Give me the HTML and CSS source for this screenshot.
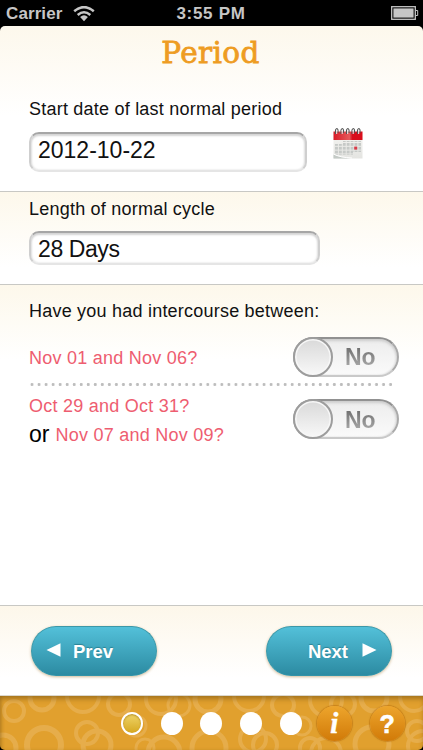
FILE: index.html
```html
<!DOCTYPE html>
<html lang="en">
<head>
<meta charset="utf-8">
<title>Period</title>
<link rel="stylesheet" href="styles.css">
</head>
<body>
<div class="app">
  <header class="status">
    <div class="status-left"><span class="carrier">Carrier</span>
      <svg class="wifi" width="22" height="16" viewBox="0 0 22 16" fill="none" stroke="#c6c6c6" stroke-width="2.5">
        <path d="M1.2 5.2Q11-3 20.8 5.2"/><path d="M4.7 9Q11 3.6 17.3 9"/><path d="M7.1 11.1Q11 7.5 14.9 11.1L11 15.3Z" fill="#c6c6c6" stroke="none"/>
      </svg>
    </div>
    <span class="time">3:55 PM</span>
    <svg class="battery" width="28" height="15" viewBox="0 0 28 15" fill="none" stroke="#c6c6c6">
      <rect x=".7" y=".7" width="23.6" height="12.6" stroke-width="1.3"/><rect x="2.4" y="2.4" width="20.2" height="9.2" fill="#c6c6c6" stroke="none"/><path d="M24.5 4.5h2.2v5h-2.2"/>
    </svg>
  </header>
  <section class="panel start">
    <h1>Period</h1>
    <label class="label start-label">Start date of last normal period</label>
    <div class="row">
      <div class="field date">2012-10-22</div>
      <svg class="calendar" width="30" height="33" viewBox="0 0 30 33">
        <defs>
          <linearGradient id="paper" x1="0" y1="0" x2="0" y2="1"><stop offset="0" stop-color="#f5f5f2"/><stop offset="1" stop-color="#e4e4e1"/></linearGradient>
          <linearGradient id="red" x1="0" y1="0" x2="1" y2="0"><stop offset="0" stop-color="#d81c28"/><stop offset=".55" stop-color="#e65a5c"/><stop offset=".65" stop-color="#d90e1c"/><stop offset="1" stop-color="#d90e1c"/></linearGradient>
          <pattern id="days" x="2" y="16" width="3.9" height="3.8" patternUnits="userSpaceOnUse"><rect width="2.9" height="2.8" fill="#c6c9c7"/></pattern>
        </defs>
        <path d="M.5 5h29v26.500H.5z" fill="url(#paper)"/>
        <path d="M.5 4.500h29V13H.5z" fill="url(#red)"/>
        <path d="M10 14h18v11h-8v3H2V17h8z" fill="url(#days)"/>
        <path d="M.5 27.500Q8 31 18 31.500H.5z" fill="#c4cac6"/><path d="M.5 27Q7 30.500 19 31" fill="none" stroke="#fff"/>
        <rect x="21.200" y="19.600" width="3" height="3" fill="#d83a48"/>
        <g fill="none" stroke="#555" stroke-width="1.100"><path d="M2.500 7V3q1.500-3 2.500 0v3"/><path d="M8 7V3q1.500-3 2.500 0v3"/><path d="M13.500 7V3q1.500-3 2.500 0v3"/><path d="M19 7V3q1.500-3 2.500 0v3"/><path d="M24.500 7V3q1.500-3 2.500 0v3"/></g>
        <g stroke="#eee" stroke-width="1"><path d="M3.700 3v4M9.200 3v4M14.700 3v4M20.200 3v4M25.700 3v4"/></g>
      </svg>
    </div>
  </section>
  <section class="panel cycle">
    <label class="label">Length of normal cycle</label>
    <div class="field length">28 Days</div>
  </section>
  <section class="panel questions">
    <p class="label ask">Have you had intercourse between:</p>
    <div class="question first"><p class="dates">Nov 01 and Nov 06?</p><div class="toggle"><i class="knob"></i><b>No</b></div></div>
    <div class="dots"></div>
    <div class="question second">
      <div class="pair"><p class="dates">Oct 29 and Oct 31?</p><p class="alt"><span class="or">or</span><span class="dates">Nov 07 and Nov 09?</span></p></div>
      <div class="toggle"><i class="knob"></i><b>No</b></div>
    </div>
  </section>
  <nav class="panel nav">
    <div class="btn prev"><svg width="15" height="14" viewBox="0 0 15 14"><path d="M.5 7L14.500.3v13.400z" fill="#fff"/></svg><span>Prev</span></div>
    <div class="btn next"><span>Next</span><svg width="15" height="14" viewBox="0 0 15 14"><path d="M14.500 7L.5.3v13.400z" fill="#fff"/></svg></div>
  </nav>
  <footer class="bar">
    <svg class="rings" width="423" height="54" viewBox="0 0 423 54" fill="none" stroke="#e6ad4b" stroke-width="5">
      <circle cx="14" cy="15" r="10" stroke-width="4"/><circle cx="42" cy="2" r="12"/><circle cx="83" cy="0" r="16" stroke-width="4"/><circle cx="119" cy="8" r="11" stroke-width="4"/><circle cx="44" cy="49" r="17" stroke-width="6"/><circle cx="3" cy="52" r="13"/><circle cx="87" cy="37" r="11" stroke-width="4"/><circle cx="97" cy="49" r="14"/><circle cx="161" cy="3" r="15" stroke-width="4"/><circle cx="179" cy="9" r="11" stroke-width="3"/><circle cx="136" cy="30" r="10" stroke-width="3"/><circle cx="145" cy="52" r="9" stroke-width="3"/><circle cx="164" cy="57" r="16"/><circle cx="208" cy="3" r="13"/><circle cx="209" cy="52" r="17"/><circle cx="249" cy="0" r="15" stroke-width="4"/><circle cx="283" cy="9" r="11" stroke-width="4"/><circle cx="253" cy="43" r="13" stroke-width="4"/><circle cx="265" cy="49" r="12" stroke-width="4"/><circle cx="302" cy="30" r="9" stroke-width="3"/><circle cx="310" cy="52" r="10" stroke-width="4"/><circle cx="326" cy="4" r="16" stroke-width="4"/><circle cx="343" cy="8" r="12" stroke-width="4"/><circle cx="326" cy="57" r="15" stroke-width="4"/><circle cx="374" cy="2" r="13"/><circle cx="372" cy="48" r="17"/><circle cx="414" cy="1" r="14" stroke-width="4"/><circle cx="417" cy="35" r="10" stroke-width="4"/><circle cx="423" cy="50" r="15" stroke-width="4"/>
    </svg>
    <div class="pages"><i class="page current"></i><i class="page"></i><i class="page"></i><i class="page"></i><i class="page"></i></div>
    <div class="round info">i</div>
    <div class="round help">?</div>
  </footer>
</div>
</body>
</html>
```
FILE: styles.css
```css
* { box-sizing: border-box; margin: 0; padding: 0; }
body { background: #000; font-family: "Liberation Sans", Arial, sans-serif; color: #111; }
svg { display: block; flex: none; }
.app { width: 423px; height: 750px; overflow: hidden; display: flex; flex-direction: column; background: #000; }
.status { height: 26px; flex: none; display: grid; grid-template-columns: 1fr auto 1fr; align-items: center; padding: 1px 4px 0 6px; color: #c6c6c6; font-weight: bold; font-size: 17px; }
.status-left { display: flex; align-items: center; gap: 11px; }
.carrier { letter-spacing: .1px; }
.time { letter-spacing: .7px; margin-left: -3px; }
.battery { justify-self: end; margin-top: -1px; }
.panel { flex: none; border-bottom: 1px solid #c8c8c4; background: linear-gradient(#fdf8eb, #fff 75px); }
.start { height: 166px; border-radius: 5px 5px 0 0; background: linear-gradient(#fdf8ec, #fff 90px); }
h1 { font: 29.5px/36px "DejaVu Serif", serif; color: #ee9c22; text-align: center; padding: 9px 2px 0 0; letter-spacing: .4px; -webkit-text-stroke: .8px #ee9c22; }
.label { display: block; font-size: 18px; line-height: 20px; padding-left: 29px; letter-spacing: .22px; }
.start-label { margin-top: 28px; }
.row { display: flex; margin-top: 13px; padding-left: 29px; gap: 26px; align-items: flex-start; }
.calendar { margin-top: -5px; }
.field { background: #fff; border: 2px solid #cfcfcf; border-top-color: #a6a6a6; border-bottom-color: #e5e5e5; border-radius: 10px; box-shadow: inset 0 2px 2px #d4d4d4, inset 1px 0 2px #e5e5e5, inset -1px 0 2px #e5e5e5; font-size: 23px; padding-left: 7px; }
.date { width: 278px; height: 40px; line-height: 33px; }
.cycle { height: 93px; padding-top: 7px; }
.length { width: 291px; height: 34px; line-height: 32px; margin: 12px 0 0 29px; letter-spacing: -.4px; }
.questions { height: 321px; padding-top: 16px; }
.question { display: flex; justify-content: space-between; padding: 0 24px 0 29px; }
.first { margin-top: 15px; height: 41px; align-items: center; }
.first > .dates { padding-top: 2px; }
.dates { font-size: 18px; line-height: 20px; color: #ee5d70; letter-spacing: .24px; }
.dots { height: 3px; width: 364px; margin: 6px 0 0 29px; background: radial-gradient(circle at 3px 1.5px, #bdbdbd 1.2px, transparent 1.8px) 0 0 / 7.04px 3px; }
.second { margin-top: 13px; }
.pair { margin-top: -3px; }
.alt { display: flex; align-items: baseline; gap: 6px; margin-top: 4px; line-height: 28px; }
.alt .dates { position: relative; top: -1px; }
.or { font-size: 23px; color: #000; line-height: 28px; }
.toggle { width: 106px; height: 40px; flex: none; border-radius: 20px; border: 2px solid #aaa; border-top-color: #919191; border-bottom-color: #c9c9c9; background: linear-gradient(#ededed, #fafafa); box-shadow: inset 0 2px 3px #ccc, inset -1px 0 2px #ddd; display: flex; align-items: center; }
.knob { width: 40px; height: 40px; flex: none; margin-left: -2px; border: 2px solid #9d9d9d; border-radius: 50%; background: linear-gradient(#d9d9d9, #f8f8f8); box-shadow: inset 0 0 0 1.5px #f7f7f7; }
.toggle b { margin-left: 12px; font-size: 23px; line-height: 26px; color: transparent; background: linear-gradient(#737373 20%, #aaa 90%); background-clip: text; -webkit-background-clip: text; padding-top: 1px; }
.nav { height: 90px; display: flex; justify-content: space-between; padding: 20px 31px 0; background: linear-gradient(#fdf7ea, #fff 72px); border-color: #dcd8ce; }
.btn { width: 126px; height: 50px; border-radius: 25px; border: 1.5px solid #3c98a8; border-bottom-color: #3293a8; background: linear-gradient(#53c0d9, #2c8ba2); box-shadow: 0 1px 3px #d0b995; display: flex; align-items: center; color: #fff; font-weight: bold; font-size: 18.5px; text-shadow: 0 -1px 1px #2b8294; }
.prev { padding-left: 14px; gap: 12px; }
.next { justify-content: flex-end; padding-right: 14px; gap: 14px; }
.btn span { padding-top: 1px; }
.btn svg { margin-top: -2px; }
.bar { position: relative; flex: none; height: 54px; background: #e1a02e; border-radius: 0 0 5px 5px; overflow: hidden; display: flex; align-items: center; padding-left: 121px; }
.bar::before { content: ""; position: absolute; z-index: 1; inset: 0; box-shadow: inset 0 4px 5px -1px rgba(130, 90, 20, .6), inset 2px 0 3px rgba(130, 90, 20, .25); }
.rings { position: absolute; left: 0; top: 0; }
.pages { display: flex; gap: 17.700px; position: relative; z-index: 2; }
.page { width: 22px; height: 23px; border-radius: 50%; background: #fff; }
.current { background: linear-gradient(#efd468, #d6a821); border: 2px solid #fff; background-clip: padding-box; box-shadow: inset 0 1px 2px #b18d28; }
.round { position: relative; z-index: 2; width: 35px; height: 35px; border-radius: 50%; background: linear-gradient(#eda52c, #d17a08); box-shadow: 0 0 1px 1px rgba(180, 105, 10, .55); color: #fff; font-weight: bold; text-align: center; }
.info { margin-left: 15px; font: italic bold 29px/34px "Liberation Serif", serif; -webkit-text-stroke: .5px #fff; }
.help { margin-left: 18px; font-size: 25px; line-height: 36px; -webkit-text-stroke: .6px #fff; }
```
